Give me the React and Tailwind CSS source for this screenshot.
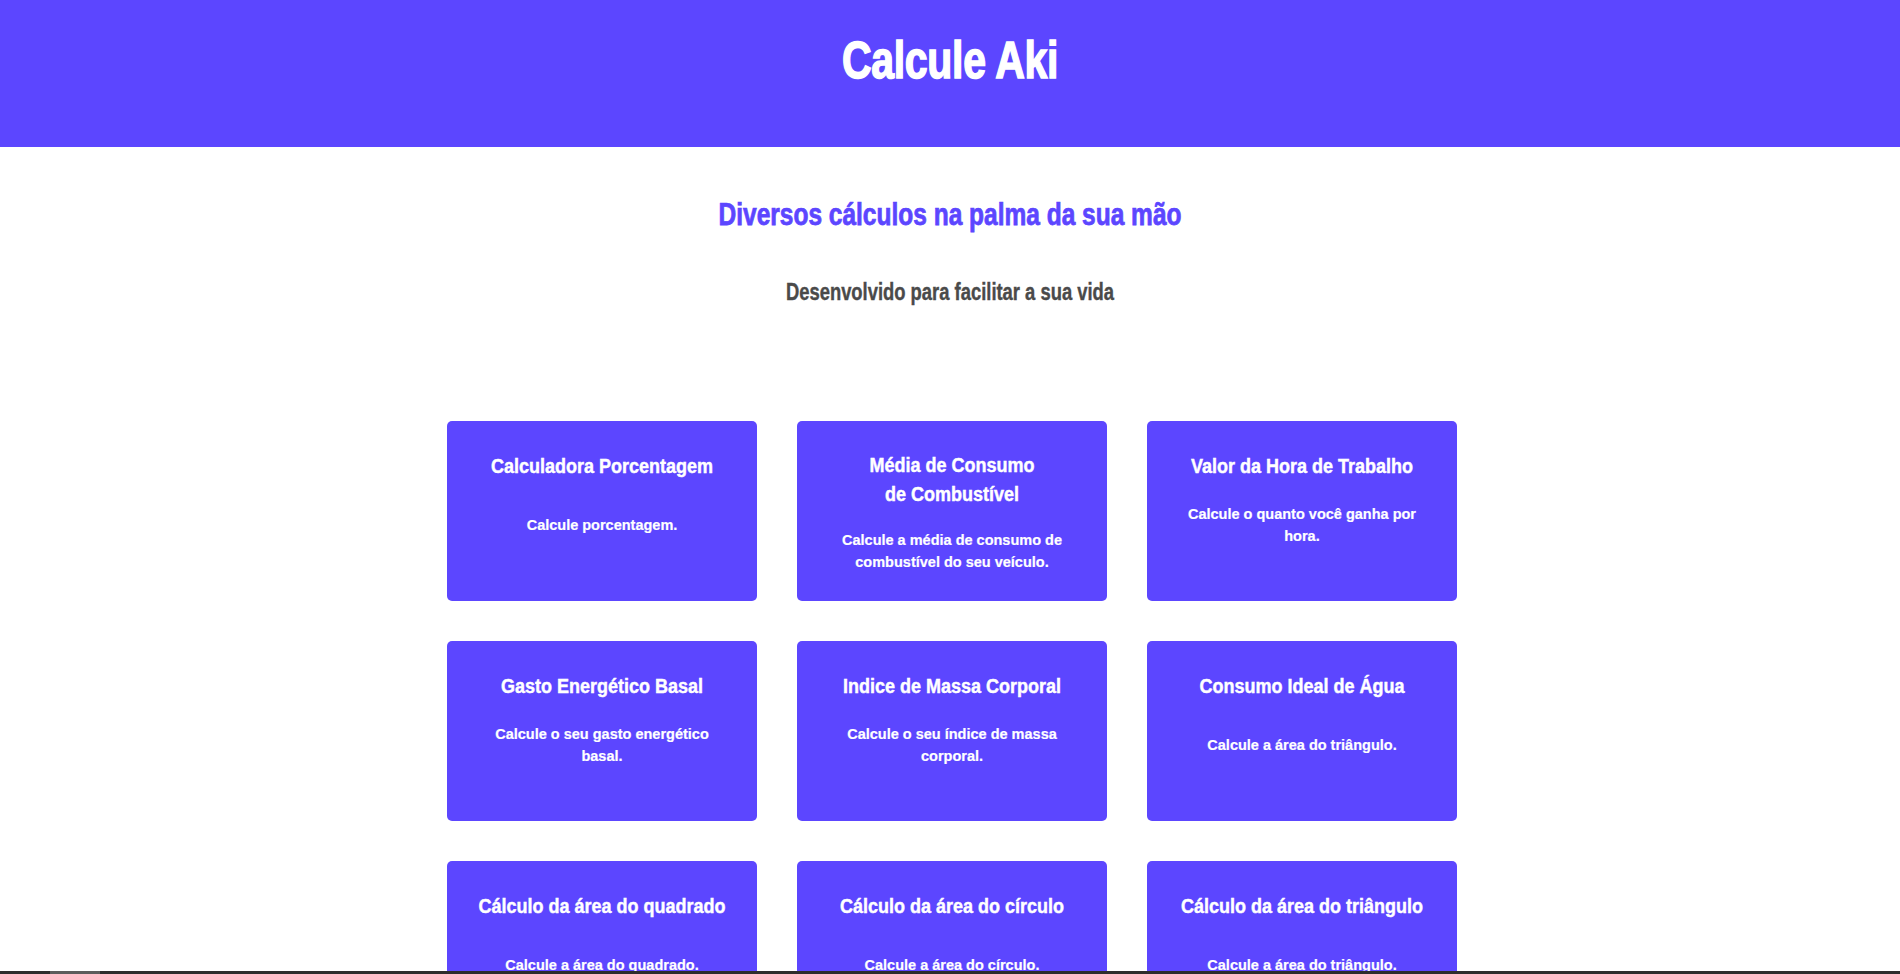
import React from 'react';

const cards = [
  { titulo: 'Calculadora Porcentagem', descricao: 'Calcule porcentagem.' },
  { titulo: ['Média de Consumo', 'de Combustível'], descricao: 'Calcule a média de consumo de combustível do seu veículo.' },
  { titulo: 'Valor da Hora de Trabalho', descricao: 'Calcule o quanto você ganha por hora.' },
  { titulo: 'Gasto Energético Basal', descricao: 'Calcule o seu gasto energético basal.' },
  { titulo: 'Indice de Massa Corporal', descricao: 'Calcule o seu índice de massa corporal.' },
  { titulo: 'Consumo Ideal de Água', descricao: 'Calcule a área do triângulo.' },
  { titulo: 'Cálculo da área do quadrado', descricao: 'Calcule a área do quadrado.' },
  { titulo: 'Cálculo da área do círculo', descricao: 'Calcule a área do círculo.' },
  { titulo: 'Cálculo da área do triângulo', descricao: 'Calcule a área do triângulo.' },
];

const Card = ({ titulo, descricao }) => (
  <a href="#" className="flex h-[180px] flex-col items-center rounded-[5px] bg-[#5c46ff] px-4 pt-[33px] text-center text-white">
    <h3 className="scale-y-[1.08] text-[18px] leading-[26px] font-bold [-webkit-text-stroke:0.4px_currentColor]">
      {Array.isArray(titulo) ? (
        <>
          {titulo[0]}
          <br />
          {titulo[1]}
        </>
      ) : (
        titulo
      )}
    </h3>
    <div className="mt-[11px] flex h-[68px] items-center justify-center px-[16px]">
      <p className="scale-y-[1.06] text-[14.5px] leading-[21px] font-bold [-webkit-text-stroke:0.2px_currentColor]">{descricao}</p>
    </div>
  </a>
);

const App = () => {
  return (
    <div className="min-h-screen bg-white font-['Liberation_Sans',Arial,sans-serif]">
      {/* cabeçalho */}
      <header className="h-[147px] bg-[#5c46ff] pt-[40px] text-center">
        <h1 className="scale-y-[1.28] text-[41px] leading-[41px] font-bold tracking-[-0.3px] text-white [-webkit-text-stroke:1.2px_currentColor]">Calcule Aki</h1>
      </header>

      <section className="pt-[53px] text-center">
        <h2 className="scale-y-[1.25] text-[24.5px] leading-[30px] font-bold text-[#5c46ff] [-webkit-text-stroke:0.6px_currentColor]">Diversos cálculos na palma da sua mão</h2>
        <p className="mt-[50px] scale-y-[1.28] text-[18.4px] leading-[24px] font-bold text-[#4a4a4a] [-webkit-text-stroke:0.3px_currentColor]">Desenvolvido para facilitar a sua vida</p>
      </section>

      <div className="mt-[117px] flex justify-center pb-10 pl-[4px]">
        <main className="grid w-[1010px] grid-cols-3 gap-[40px]">
          {cards.map((card, i) => (
            <Card key={i} titulo={card.titulo} descricao={card.descricao} />
          ))}
        </main>
      </div>

      {/* barra de rolagem horizontal */}
      <div className="fixed bottom-0 left-0 right-0 h-[3px] bg-[#2d2d2d]">
        <div className="ml-[50px] h-full w-[50px] bg-[#5c5c5c]" />
      </div>
    </div>
  );
};

export default App;
